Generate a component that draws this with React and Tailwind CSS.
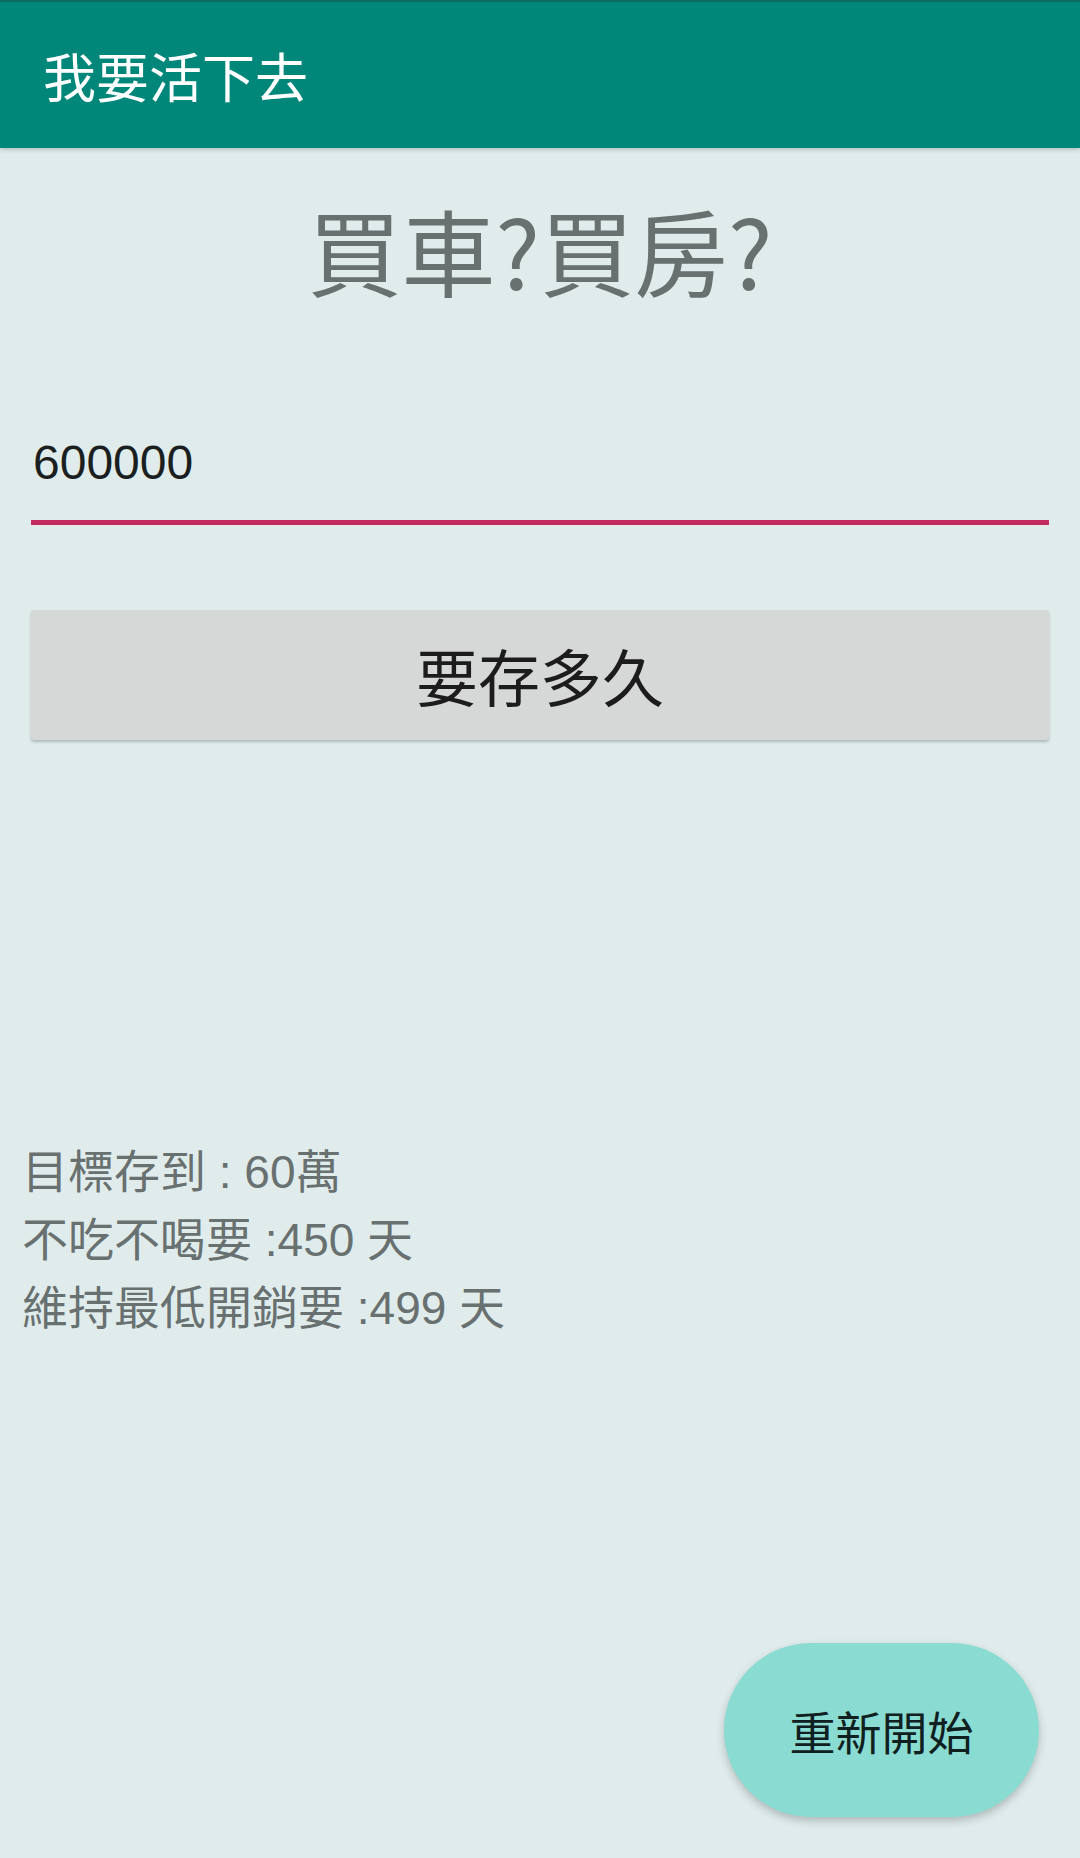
const cjk = { fontFamily: '"Noto Sans CJK TC", "Noto Sans", sans-serif' };
const mixed = { fontFamily: '"Liberation Sans", "Noto Sans CJK TC", sans-serif' };

export default function App() {
  return (
    <div className="relative min-h-[1858px] bg-[#e0ecec]" style={cjk}>
      <header className="flex h-[148px] items-center border-t-2 border-[#0f6b62] bg-[#00877a] pl-[43px] shadow-[0_2px_4px_rgba(0,0,0,0.18)]">
        <h1 className="text-[53px] leading-none text-white">我要活下去</h1>
      </header>

      <main className="px-[31px]">
        <h2 className="mt-[54px] text-center text-[94px] leading-[94px] text-[#687070]">
          買車?買房?
        </h2>

        <div className="mt-[143px] border-b-[5px] border-[#c42a60] pb-[33px] pl-[2px]">
          <span
            className="block text-[48px] leading-[48px] text-[#1b1f1f]"
            style={{ fontFamily: '"Liberation Sans", Arial, sans-serif' }}
          >
            600000
          </span>
        </div>

        <button className="mt-[85px] flex h-[130px] w-full items-center justify-center rounded-[3px] bg-[#d6d7d7] text-[62px] leading-none text-[#1c1c1c] shadow-[0_2px_3px_rgba(0,0,0,0.22)]">
          要存多久
        </button>
      </main>

      <div className="mt-[398px] pl-[22px] text-[46px] leading-[68px] text-[#687070]" style={mixed}>
        <p>目標存到 : 60萬</p>
        <p>不吃不喝要 :450 天</p>
        <p>維持最低開銷要 :499 天</p>
      </div>

      <button className="absolute bottom-[41px] right-[41px] flex h-[174px] w-[315px] items-center justify-center rounded-full bg-[#8adcd2] text-[46px] leading-none text-[#102020] shadow-[0_4px_8px_rgba(0,0,0,0.22)]">
        重新開始
      </button>
    </div>
  );
}
